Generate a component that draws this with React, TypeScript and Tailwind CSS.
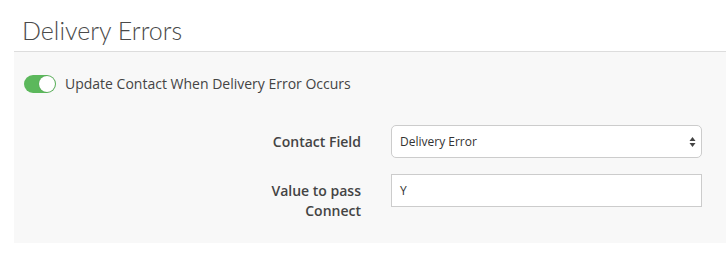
import React from "react";

export default function App() {
  return (
    <div className="w-[726px] h-[268px] bg-white" style={{ fontFamily: '"Open Sans", sans-serif' }}>
      <div className="pt-[14px] h-[52px] border-b border-[#dddddd] ml-[14px] pl-[8px]">
        <h2 className="text-[25px] leading-[32px] font-light text-[#4a4a4a]" style={{ fontFamily: 'Lato, sans-serif' }}>
          Delivery Errors
        </h2>
      </div>
      <div className="ml-[14px] bg-[#f8f8f8] h-[191px] pl-[10px] pt-[22px]">
        <div className="flex items-center gap-[9px]">
          <div className="w-[32px] h-[18px] rounded-full bg-[#5cb85c] relative">
            <div className="absolute right-[1px] top-[1px] w-[16px] h-[16px] rounded-full bg-white shadow-[0_0_1px_rgba(0,0,0,0.3)]" />
          </div>
          <span className="text-[14px] leading-[20px] text-[#444444]">Update Contact When Delivery Error Occurs</span>
        </div>
        <div className="mt-[31px] flex flex-col gap-[16px]">
          <div className="flex items-start">
            <label className="w-[337px] text-right font-semibold text-[14px] leading-[20px] text-[#444444] pt-[7px]">Contact Field</label>
            <div className="ml-[30px] w-[311px] h-[33px] border border-[#cccccc] rounded-[5px] bg-white flex items-center justify-between pl-[8px] pr-[5px]">
              <span className="text-[12px] text-[#333333]">Delivery Error</span>
              <svg width="7" height="12" viewBox="0 0 7 12">
                <path d="M3.5 1 L6.5 5 L0.5 5 Z" fill="#444" />
                <path d="M3.5 11 L6.5 7 L0.5 7 Z" fill="#444" />
              </svg>
            </div>
          </div>
          <div className="flex items-start">
            <label className="w-[337px] text-right font-semibold text-[14px] leading-[20px] text-[#444444] pt-[7px]">
              Value to pass<br />Connect
            </label>
            <div className="ml-[30px] w-[311px] h-[33px] border border-[#cccccc] bg-white flex items-center pl-[8px]">
              <span className="text-[12px] text-[#333333]">Y</span>
            </div>
          </div>
        </div>
      </div>
    </div>
  );
}
